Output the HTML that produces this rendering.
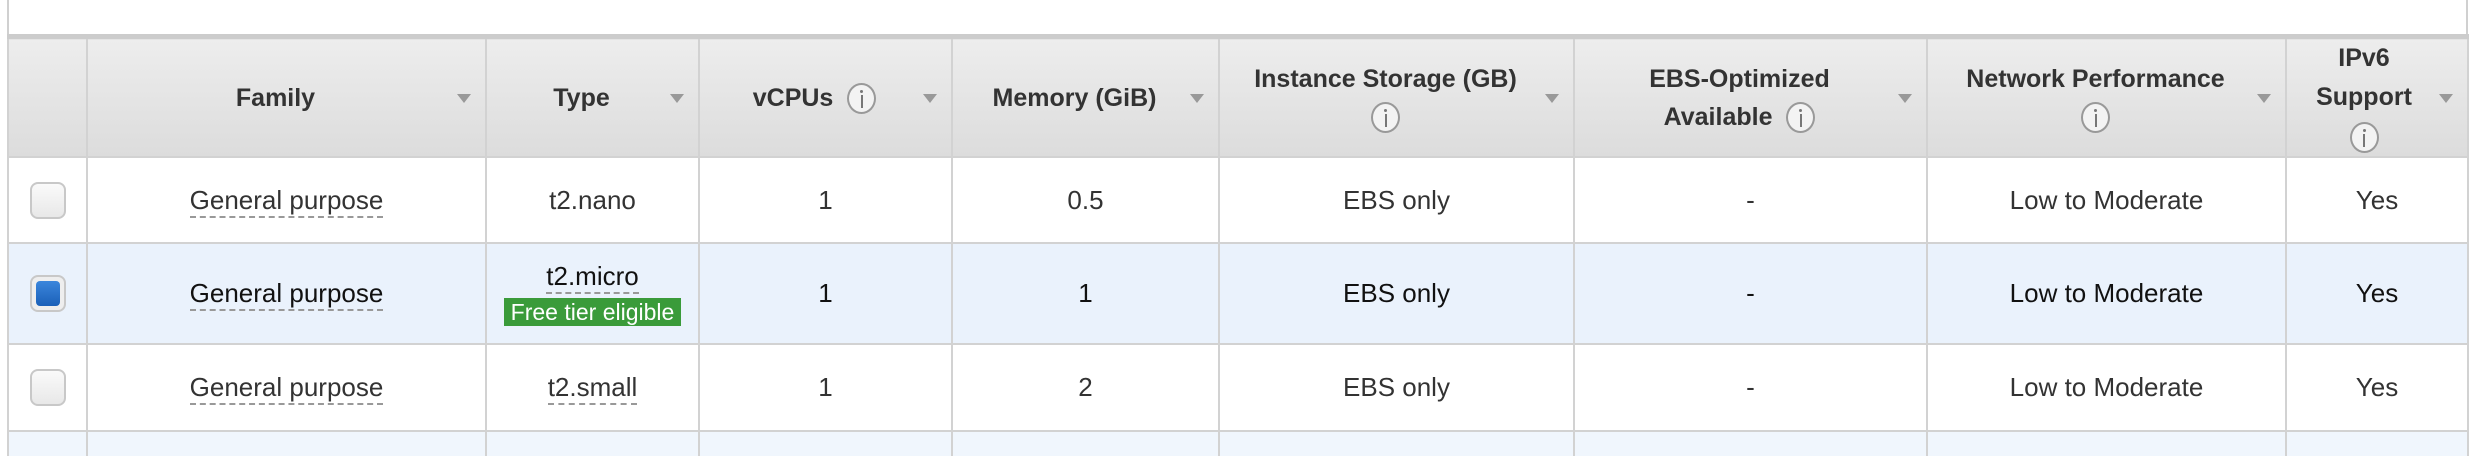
<!DOCTYPE html>
<html><head><meta charset="utf-8"><style>
html,body{margin:0;padding:0;background:#fff;width:2486px;height:456px;overflow:hidden;font-family:"Liberation Sans",Arial,sans-serif;}
.wrap{position:absolute;left:7px;top:0;width:2461px;height:456px;border-left:2px solid #d0d0d0;border-right:2px solid #d0d0d0;box-sizing:border-box;}
table{position:absolute;left:7px;top:34px;border-collapse:collapse;table-layout:fixed;}
th,td{border:2px solid #d2d2d2;text-align:center;padding:0;position:relative;}
tr.top th{border-top:5px solid #cccccc;}
th{background:linear-gradient(#ededed,#dcdcdc);font-weight:bold;font-size:25px;color:#333;height:117px;line-height:38px;padding-right:22px;}
th:first-child{padding:0}
th .arr{position:absolute;right:14px;top:55px;width:0;height:0;border-left:7px solid transparent;border-right:7px solid transparent;border-top:9px solid #999;}
.i{display:inline-block;width:29px;height:31px;border:2px solid #999;border-radius:50%;vertical-align:middle;position:relative;box-sizing:border-box;background:#f3f3f3;}
.i:after{content:"";position:absolute;left:11.5px;top:10px;width:2px;height:13px;background:#777;}
.i:before{content:"";position:absolute;left:11px;top:5px;width:3px;height:3px;background:#777;border-radius:50%;}
td{font-size:26px;color:#333;}
tr.r1 td{height:84px;background:#fff;}
tr.r2 td{height:99px;background:#eaf2fc;color:#111;}
tr.r3 td{height:85px;background:#fff;}
tr.r4 td{height:24px;background:#f0f6fd;border-bottom:none;}
.u{border-bottom:2px dashed #999;padding-bottom:1px;}
.cb{display:inline-block;width:36px;height:37px;border:2px solid #c8c8c8;border-radius:8px;background:linear-gradient(#fafafa,#e8e8e8);box-sizing:border-box;vertical-align:middle;}
.cb.on{background:#eee;position:relative;}
.cb.on:after{content:"";position:absolute;left:4px;top:4px;width:24px;height:25px;border-radius:4px;background:linear-gradient(#3b86dc,#1b60b8);}
.ft{display:inline-block;background:#3a9b3a;color:#fff;font-size:23px;padding:0 7px;height:28px;line-height:28px;margin-top:6px;}
</style></head><body>
<div class="wrap"></div>
<table>
<colgroup><col style="width:79px"><col style="width:399px"><col style="width:213px"><col style="width:253px"><col style="width:267px"><col style="width:355px"><col style="width:353px"><col style="width:359px"><col style="width:182px"></colgroup>
<tr class="top">
<th></th>
<th>Family<span class="arr"></span></th>
<th>Type<span class="arr"></span></th>
<th>vCPUs &nbsp;<span class="i"></span><span class="arr"></span></th>
<th>Memory (GiB)<span class="arr"></span></th>
<th>Instance Storage (GB)<br><span class="i"></span><span class="arr"></span></th>
<th>EBS-Optimized<br>Available &nbsp;<span class="i"></span><span class="arr"></span></th>
<th>Network Performance<br><span class="i"></span><span class="arr"></span></th>
<th style="line-height:39px;padding-right:26px">IPv6<br>Support<br><span class="i"></span><span class="arr"></span></th>
</tr>
<tr class="r1"><td><span class="cb"></span></td><td><span class="u">General purpose</span></td><td>t2.nano</td><td>1</td><td>0.5</td><td>EBS only</td><td>-</td><td>Low to Moderate</td><td>Yes</td></tr>
<tr class="r2"><td><span class="cb on"></span></td><td><span class="u">General purpose</span></td><td><span class="u">t2.micro</span><br><span class="ft">Free tier eligible</span></td><td>1</td><td>1</td><td>EBS only</td><td>-</td><td>Low to Moderate</td><td>Yes</td></tr>
<tr class="r3"><td><span class="cb"></span></td><td><span class="u">General purpose</span></td><td><span class="u">t2.small</span></td><td>1</td><td>2</td><td>EBS only</td><td>-</td><td>Low to Moderate</td><td>Yes</td></tr>
<tr class="r4"><td></td><td></td><td></td><td></td><td></td><td></td><td></td><td></td><td></td></tr>
</table>
</body></html>
